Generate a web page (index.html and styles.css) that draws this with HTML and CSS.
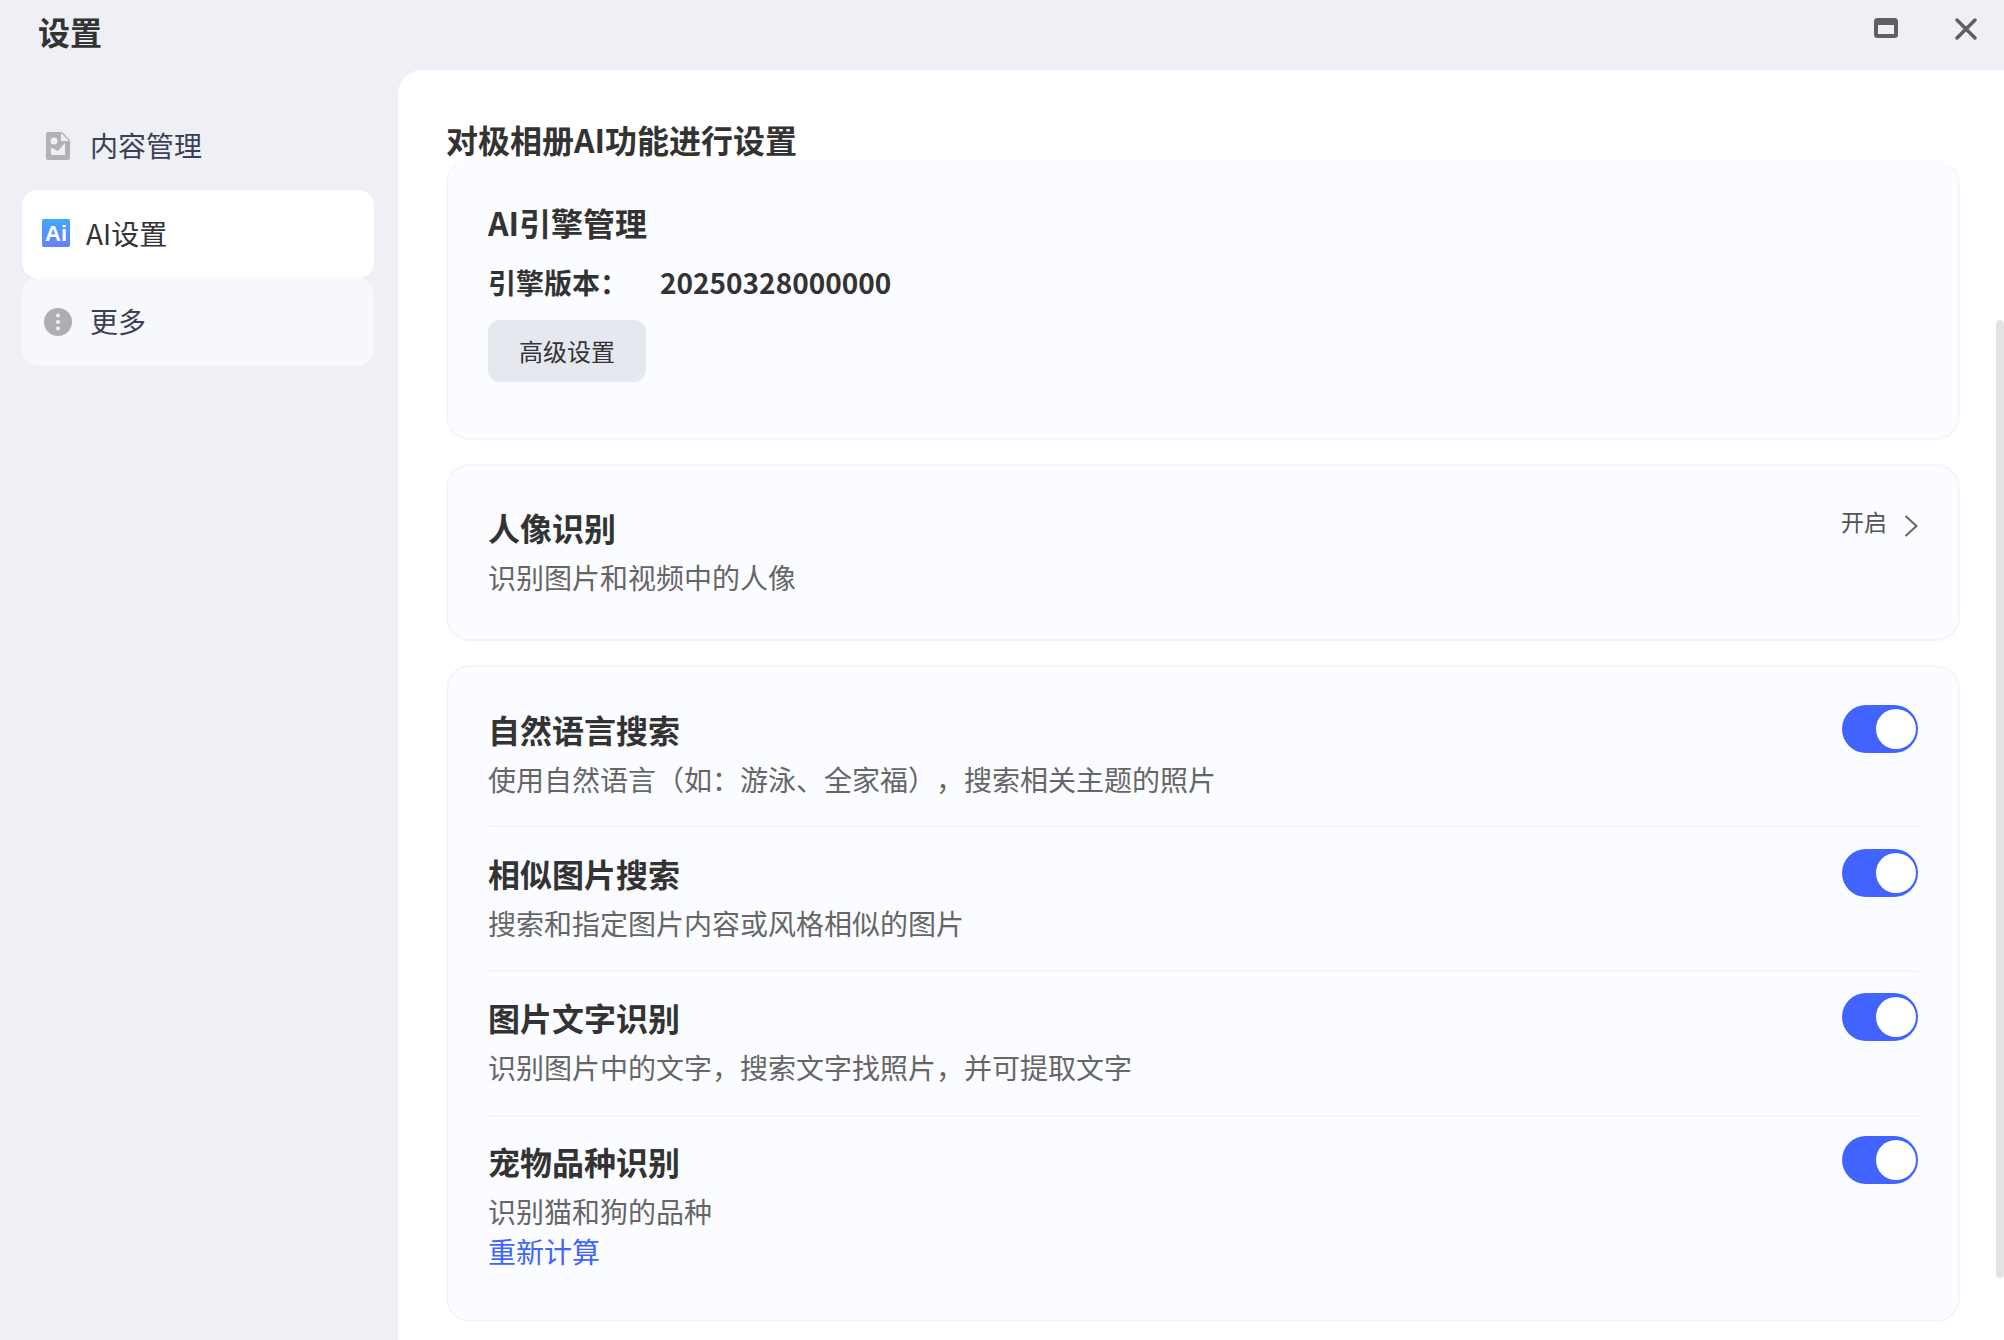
FILE: index.html
```html
<!DOCTYPE html>
<html lang="zh-CN">
<head>
<meta charset="utf-8">
<title>设置</title>
<link rel="stylesheet" href="styles.css">
</head>
<body>
<div class="app">
  <header class="topbar">
    <div class="app-title">设置</div>
    <div class="win-controls">
      <svg class="win-icon" width="24" height="20" viewBox="0 0 24 20"><rect x="2" y="2" width="20" height="16" rx="1.5" fill="none" stroke="#5f5f62" stroke-width="4"/><rect x="1" y="1" width="22" height="6" fill="#5f5f62"/></svg>
      <svg class="win-icon" width="22" height="22" viewBox="0 0 22 22"><path d="M2 2L20 20M20 2L2 20" stroke="#5f5f62" stroke-width="3.500" stroke-linecap="round"/></svg>
    </div>
  </header>
  <div class="body-row">
    <nav class="sidebar">
      <div class="nav-item">
        <svg class="nav-icon doc" width="24" height="28" viewBox="0 0 24 28"><path d="M2 0H16L24 8V26a2 2 0 0 1-2 2H2a2 2 0 0 1-2-2V2a2 2 0 0 1 2-2Z" fill="#b1b2b4"/><path d="M15 1V9H23Z" fill="#eef0f5"/><circle cx="8" cy="9" r="3.500" fill="#eef0f5"/><path d="M5 15.500L12 19L19 11V23H5Z" fill="#eef0f5"/></svg>
        <span class="nav-label">内容管理</span>
      </div>
      <div class="nav-item active">
        <svg class="nav-icon ai" width="28" height="28" viewBox="0 0 28 28"><defs><linearGradient id="aig" x1="0" y1="0" x2="0" y2="1"><stop offset="0" stop-color="#3fa9fb"/><stop offset="1" stop-color="#6a7ffb"/></linearGradient></defs><rect width="28" height="28" rx="2" fill="url(#aig)"/><text x="14" y="22" text-anchor="middle" class="ai-text">Ai</text></svg>
        <span class="nav-label dark">AI设置</span>
      </div>
      <div class="nav-item more">
        <svg class="nav-icon" width="28" height="28" viewBox="0 0 28 28"><circle cx="14" cy="14" r="14" fill="#adaeb0"/><circle cx="14" cy="7.500" r="2" fill="#eef0f5"/><circle cx="14" cy="14" r="2" fill="#eef0f5"/><circle cx="14" cy="20.500" r="2" fill="#eef0f5"/></svg>
        <span class="nav-label">更多</span>
      </div>
    </nav>
    <main class="main">
      <h1 class="page-title">对极相册AI功能进行设置</h1>
      <div class="scroll">
        <section class="card engine">
          <h2 class="engine-title">AI引擎管理</h2>
          <div class="version"><span class="version-label">引擎版本：</span><span class="version-num">20250328000000</span></div>
          <button class="btn">高级设置</button>
        </section>
        <section class="card single">
          <div class="row-text">
            <div class="row-title">人像识别</div>
            <div class="row-desc">识别图片和视频中的人像</div>
          </div>
          <div class="open-link">
            <span>开启</span>
            <svg width="14" height="22" viewBox="0 0 14 22"><path d="M1.500 1L12.500 11L1.500 21" fill="none" stroke="#666" stroke-width="2"/></svg>
          </div>
        </section>
        <section class="card list">
          <div class="row">
            <div class="row-text">
              <div class="row-title">自然语言搜索</div>
              <div class="row-desc">使用自然语言（如：游泳、全家福），搜索相关主题的照片</div>
            </div>
            <div class="switch"><div class="knob"></div></div>
          </div>
          <div class="row second">
            <div class="row-text">
              <div class="row-title">相似图片搜索</div>
              <div class="row-desc">搜索和指定图片内容或风格相似的图片</div>
            </div>
            <div class="switch"><div class="knob"></div></div>
          </div>
          <div class="row">
            <div class="row-text">
              <div class="row-title">图片文字识别</div>
              <div class="row-desc">识别图片中的文字，搜索文字找照片，并可提取文字</div>
            </div>
            <div class="switch"><div class="knob"></div></div>
          </div>
          <div class="row last">
            <div class="row-text">
              <div class="row-title">宠物品种识别</div>
              <div class="row-desc">识别猫和狗的品种</div>
              <div class="row-link">重新计算</div>
            </div>
            <div class="switch"><div class="knob"></div></div>
          </div>
        </section>
      </div>
      <div class="scrollbar"></div>
    </main>
  </div>
</div>
</body>
</html>
```
FILE: styles.css
```css
* { box-sizing: border-box; }
html, body { margin: 0; height: 100%; overflow: hidden; }
body {
  font-family: "Noto Sans CJK SC", "Noto Sans", sans-serif;
  background: #eef0f5;
  color: #333;
  text-spacing-trim: space-all;
}
.app { display: flex; flex-direction: column; width: 2004px; height: 1340px; }
.topbar {
  height: 70px;
  flex: none;
  display: flex;
  justify-content: space-between;
  padding: 0 27px 0 38px;
}
.app-title { font-size: 32px; font-weight: 700; line-height: 62px; color: #333; }
.win-controls { display: flex; gap: 57px; padding-top: 18px; align-items: flex-start; }
.win-icon { display: block; }
.body-row { flex: 1; display: flex; min-height: 0; }
.sidebar { width: 398px; flex: none; padding: 32px 24px 0 22px; }
.nav-item {
  height: 88px;
  border-radius: 16px;
  display: flex;
  align-items: center;
  padding-left: 24px;
}
.nav-item.active { background: #fff; padding-left: 20px; }
.nav-item.more { background: #f7f8fc; padding-left: 22px; }
.nav-icon { flex: none; display: block; }
.nav-item.active .nav-icon { margin-top: -3px; }
.nav-label { font-size: 28px; color: #3a3f55; margin-left: 20px; line-height: 1; padding-bottom: 2px; }
.nav-item.more .nav-label { margin-left: 18px; }
.nav-item.active .nav-label { margin-left: 16px; }
.nav-label.dark { color: #333; }
.ai-text { font: 700 22px "Liberation Sans", sans-serif; fill: #fff; }
.main {
  flex: 1;
  position: relative;
  background: #fff;
  border-top-left-radius: 24px;
  padding: 0 44px 0 48px;
  display: flex;
  flex-direction: column;
  min-width: 0;
  overflow: hidden;
}
.page-title {
  margin: 0;
  font-size: 32px;
  font-weight: 700;
  color: #333;
  height: 90px;
  line-height: 44px;
  padding-top: 47px;
  flex: none;
}
.scroll { flex: 1; display: flex; flex-direction: column; gap: 24px; min-height: 0; }
.card {
  background: #fbfcff;
  border: 2px solid #f4f5fb;
  border-radius: 24px;
  flex: none;
}
.engine { height: 280px; padding: 38px 40px 0; border-top: 0; }
.engine-title { margin: 0; font-size: 32px; font-weight: 700; line-height: 48px; color: #333; }
.version { display: flex; font-size: 28px; font-weight: 700; line-height: 44px; margin-top: 14px; }
.version-label { width: 172px; }
.btn {
  display: block;
  margin-top: 16px;
  padding: 0 0 2px;
  width: 158px;
  height: 62px;
  border: 0;
  border-radius: 12px;
  background: #e6e8ef;
  color: #333;
  font: 400 24px "Noto Sans CJK SC", sans-serif;
}
.single {
  height: 177px;
  padding: 37px 40px 0;
  display: flex;
  justify-content: space-between;
}
.row-title { font-size: 32px; font-weight: 700; line-height: 48px; color: #333; }
.row-desc { font-size: 28px; line-height: 40px; color: #666; margin-top: 6px; }
.row-link { font-size: 28px; line-height: 40px; color: #4164ff; }
.open-link { display: flex; align-items: flex-start; gap: 17px; font-size: 23px; color: #555; padding-top: 1px; }
.open-link span { line-height: 34px; }
.open-link svg { margin-top: 11px; }
.list { height: 657px; padding: 0 40px; }
.row {
  height: 145px;
  display: flex;
  justify-content: space-between;
  padding-top: 21px;
  border-bottom: 2px solid #f4f5fb;
}
.row:first-child { height: 160px; padding-top: 38px; }
.row.second { padding-top: 22px; }
.row.last { border-bottom: 0; padding-top: 20px; }
.row.last .switch { margin-top: -1px; }
.switch {
  width: 76px;
  height: 48px;
  background: #4164ff;
  border-radius: 24px;
  flex: none;
  display: flex;
  justify-content: flex-end;
  align-items: center;
  padding-right: 2px;
}
.knob { width: 40px; height: 40px; background: #fff; border-radius: 50%; }
.scrollbar {
  position: absolute;
  right: 0;
  top: 250px;
  width: 8px;
  height: 958px;
  background: #e3e3e3;
  border-radius: 4px;
}
```
